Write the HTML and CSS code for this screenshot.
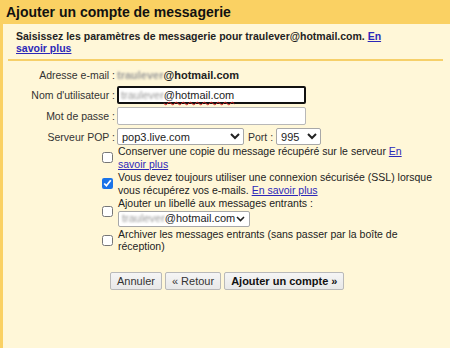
FILE: index.html
```html
<!DOCTYPE html>
<html lang="fr">
<head>
  <meta charset="UTF-8" />
  <title>Ajouter un compte de messagerie</title>
  <meta name="viewport" content="width=device-width, initial-scale=1.0" />
  <link rel="stylesheet" href="styles.css">
</head>
<body>

<div class="header">
  <h1>Ajouter un compte de messagerie</h1>
</div>

<div class="panel">
  <p class="intro">Saisissez les paramètres de messagerie pour traulever@hotmail.com. <a href="#">En savoir plus</a></p>
  <div class="rule"></div>

  <div class="form">
    <span class="label">Adresse e-mail :</span>
    <span class="value"><span class="masked">traulever</span>@hotmail.com</span>

    <span class="label">Nom d'utilisateur :</span>
    <div class="field focused"><span class="masked">traulever</span><span class="spell">@hotmail.com</span></div>

    <span class="label">Mot de passe :</span>
    <input class="field" type="password" value="">

    <span class="label">Serveur POP :</span>
    <div class="server">
      <select class="pop"><option>pop3.live.com</option></select>
      <span class="port-label">Port :</span>
      <select class="port"><option>995</option></select>
    </div>
  </div>

  <div class="options">
    <input class="check" type="checkbox">
    <div class="text narrow">Conserver une copie du message récupéré sur le serveur <a href="#">En savoir plus</a></div>

    <input class="check" type="checkbox" checked>
    <div class="text">Vous devez toujours utiliser une connexion sécurisée (SSL) lorsque vous récupérez vos e-mails. <a href="#">En savoir plus</a></div>

    <input class="check" type="checkbox">
    <div class="text">
      Ajouter un libellé aux messages entrants :
      <div class="fake-select"><span><span class="masked">traulever</span>@hotmail.com</span><svg width="9" height="6" viewBox="0 0 9 6"><path d="M1 1l3.5 3.5L8 1" fill="none" stroke="#222" stroke-width="1.6"/></svg></div>
    </div>

    <input class="check" type="checkbox">
    <div class="text">Archiver les messages entrants (sans passer par la boîte de réception)</div>
  </div>

  <div class="actions">
    <button>Annuler</button>
    <button>« Retour</button>
    <button class="primary">Ajouter un compte »</button>
  </div>
</div>

</body>
</html>
```

FILE: styles.css
```css
* { margin: 0; padding: 0; box-sizing: border-box; }

body {
  font-family: "Liberation Sans", Arial, sans-serif;
  font-size: 10.5px;
  color: #222;
  background: #fff7d8;
  height: 100vh;
  overflow: hidden;
}

.header {
  background: #fad163;
  height: 24px;
  padding: 4px 6px 0;
}

h1 {
  font-size: 14px;
  font-weight: bold;
  color: #111;
}

.panel {
  border-left: 3px solid #fad163;
  height: calc(100vh - 24px);
  padding-top: 6px;
}

a { color: #2c28b8; }

.intro {
  font-weight: bold;
  line-height: 12px;
  width: 385px;
  margin-left: 13px;
}

.rule {
  height: 2px;
  background: #f6d06a;
  margin: 5px 7px 0 5px;
}

.form,
.options {
  display: grid;
  grid-template-columns: 112px 1fr;
  column-gap: 2px;
  align-items: center;
  width: 430px;
}

.form {
  row-gap: 3px;
  margin-top: 6px;
}

.options {
  row-gap: 1px;
}

.label {
  text-align: right;
  color: #333;
}

.value {
  font-weight: bold;
  font-size: 11px;
  line-height: 16px;
}

.masked {
  color: #999;
  filter: blur(0.8px);
}

.field {
  width: 189px;
  height: 18px;
  border: 1px solid #b8b8b8;
  border-radius: 2px;
  background: #fff;
  font: inherit;
  font-size: 11px;
  padding: 1px 3px;
  line-height: 14px;
}

.field.focused {
  border: 2px solid #111;
  padding: 0 2px;
}

.spell {
  text-decoration: underline wavy #d42020;
  text-decoration-thickness: 1px;
  text-underline-offset: 2px;
}

.server {
  display: flex;
  align-items: center;
}

select {
  font: inherit;
  font-size: 11px;
  height: 17px;
  border: 1px solid #a8a8a8;
  border-radius: 2px;
  background: #fff;
  color: #222;
}

.pop { width: 127px; }
.port { width: 45px; }

.port-label {
  margin: 0 3px 0 4px;
  color: #333;
}

.check {
  width: 11px;
  height: 11px;
  margin: 0 2px 0 0;
  justify-self: end;
  accent-color: #1a73e8;
}

.text {
  line-height: 12.5px;
  padding-left: 1px;
}

.text.narrow {
  padding-right: 12px;
}

.fake-select {
  display: flex;
  width: 132px;
  justify-content: space-between;
  align-items: center;
  height: 16px;
  margin-top: 1px;
  padding: 0 4px 0 3px;
  border: 1px solid #a8a8a8;
  border-radius: 2px;
  background: #fff;
  font-size: 11px;
}

.actions {
  display: flex;
  gap: 3px;
  margin: 19px 0 0 107px;
}

button {
  font: inherit;
  font-size: 11px;
  height: 18px;
  padding: 0 6px;
  border: 1px solid #b9b9b9;
  border-radius: 2px;
  background: linear-gradient(#f5f5f5, #e8e8e8);
  color: #333;
}

button.primary {
  font-weight: bold;
  color: #111;
}
```
